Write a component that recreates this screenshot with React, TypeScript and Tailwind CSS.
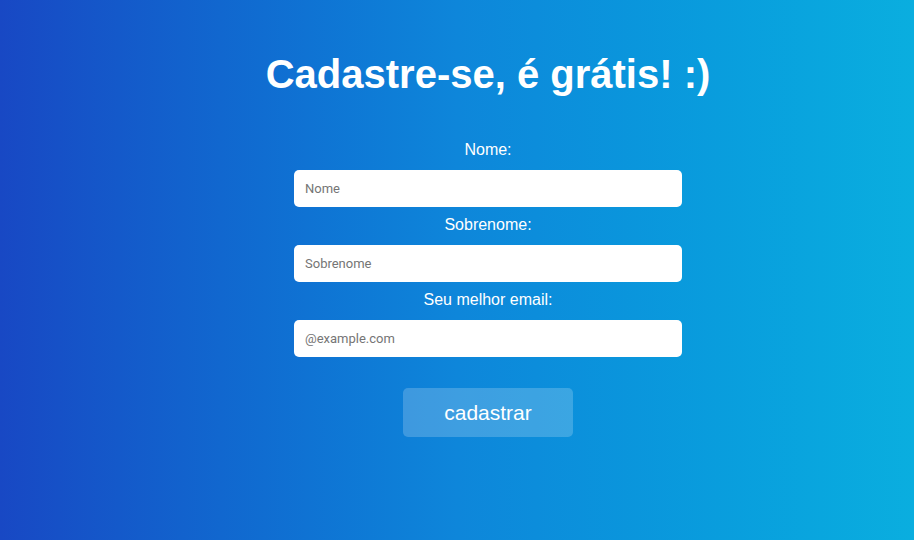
export default function App() {
  return (
    <div className="min-h-[540px] w-full bg-gradient-to-r from-[#1848c4] via-[#0e86da] to-[#0aaedf] font-['Liberation_Sans',Arial,sans-serif]">
      <div className="flex flex-col items-center pl-[62px] pt-[50px]">
        <h1 className="text-[40px] font-bold leading-[48px] text-white">Cadastre-se, é grátis! :)</h1>
        <form className="mt-[42px] flex w-[388px] flex-col items-center">
          <label className="text-base leading-[20px] text-white">Nome:</label>
          <input
            placeholder="Nome"
            className="mt-[10px] h-[37px] w-full rounded-[5px] bg-white px-[11px] text-[13px] font-['Roboto',Arial,sans-serif] text-gray-800 outline-none placeholder:text-[#757575]"
          />
          <label className="mt-[8px] text-base leading-[20px] text-white">Sobrenome:</label>
          <input
            placeholder="Sobrenome"
            className="mt-[10px] h-[37px] w-full rounded-[5px] bg-white px-[11px] text-[13px] font-['Roboto',Arial,sans-serif] text-gray-800 outline-none placeholder:text-[#757575]"
          />
          <label className="mt-[8px] text-base leading-[20px] text-white">Seu melhor email:</label>
          <input
            type="email"
            placeholder="@example.com"
            className="mt-[10px] h-[37px] w-full rounded-[5px] bg-white px-[11px] text-[13px] font-['Roboto',Arial,sans-serif] text-gray-800 outline-none placeholder:text-[#757575]"
          />
          <button
            type="button"
            className="mt-[31px] h-[49px] w-[170px] rounded-[5px] bg-white/20 text-[21px] text-white"
          >
            cadastrar
          </button>
        </form>
      </div>
    </div>
  );
}
